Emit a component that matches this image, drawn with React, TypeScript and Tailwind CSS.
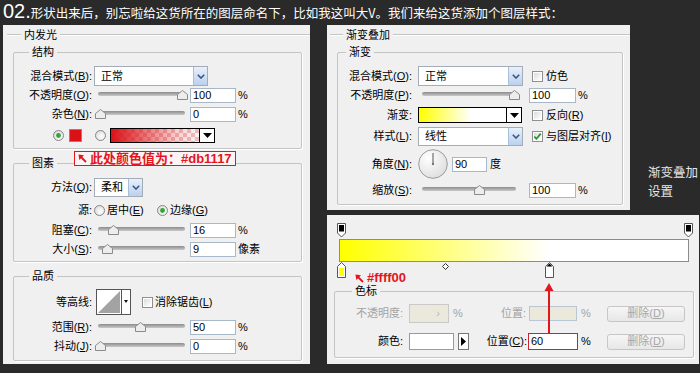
import React from "react";

const F = "font-['Liberation_Sans','Noto_Sans_CJK_SC',sans-serif]";
const LINE = "h-[2px] border-t border-t-[#c4c4c4] border-b border-b-white";
const GROUP = "border border-[#c4c4c4] rounded-[2px] shadow-[1px_1px_0_#ffffff]";
const LEGEND = "px-[3px] leading-[14px]";

function U({ c }: { c: string }) {
  return <span className="underline decoration-1 underline-offset-[1px]">{c}</span>;
}

function Lbl({ t, k, w, cls = "" }: { t: string; k?: string; w: string; cls?: string }) {
  return (
    <span className={`${w} text-right whitespace-nowrap shrink-0 ${cls}`}>
      {t}
      {k ? (
        <>
          (<U c={k} />)
        </>
      ) : null}
      :
    </span>
  );
}

function Slider({ cls, pos }: { cls: string; pos: number }) {
  return (
    <div className={`relative h-[15px] shrink-0 ${cls}`}>
      <div className="absolute left-0 right-0 top-[4px] h-[4px] rounded-full bg-gradient-to-b from-[#8c8c8c] to-[#c9c9c9]" />
      <svg className="absolute top-[2px]" style={{ left: pos - 5 }} width="11" height="10" viewBox="0 0 11 10">
        <path d="M0.5,4.5 L5.5,0.5 L10.5,4.5 L10.5,9.5 L0.5,9.5 Z" fill="#ededed" stroke="#8a8a8a" />
      </svg>
    </div>
  );
}

function Field({ v, cls = "", h = "h-[15px]", border = "border-[#a9b8c8]" }: { v: string; cls?: string; h?: string; border?: string }) {
  return (
    <div className={`${h} shrink-0 bg-white border ${border} pl-[2px] flex items-center text-[11px] leading-none ${cls}`}>
      {v}
    </div>
  );
}

function Chevron() {
  return (
    <svg width="8" height="5" viewBox="0 0 8 5">
      <path d="M0.8,0.8 L4,4 L7.2,0.8" fill="none" stroke="#3a5684" strokeWidth="1.6" />
    </svg>
  );
}

function Select({ v, cls }: { v: string; cls: string }) {
  return (
    <div className={`flex shrink-0 bg-white border border-[#a3acb7] ${cls}`}>
      <span className="flex-1 pl-[6px] flex items-center">{v}</span>
      <span className="w-[14px] flex items-center justify-center bg-gradient-to-b from-[#e8f0fb] to-[#bcd1ee] border-l border-[#a9bfd9]">
        <Chevron />
      </span>
    </div>
  );
}

function Check({ on = false, cls = "" }: { on?: boolean; cls?: string }) {
  return (
    <svg className={`shrink-0 ${cls}`} width="11" height="11" viewBox="0 0 11 11">
      <defs>
        <linearGradient id="cb" x1="0" y1="0" x2="1" y2="1">
          <stop offset="0" stopColor="#dcdcdc" />
          <stop offset="1" stopColor="#ffffff" />
        </linearGradient>
      </defs>
      <rect x="0.5" y="0.5" width="10" height="10" fill="#fff" stroke="#8e8f8f" />
      <rect x="2" y="2" width="7" height="7" fill="url(#cb)" />
      {on && <path d="M2.3,5.5 L4.4,7.8 L8.8,2.6" fill="none" stroke="#1f9a1f" strokeWidth="1.7" />}
    </svg>
  );
}

function Radio({ on = false, cls = "" }: { on?: boolean; cls?: string }) {
  return (
    <svg className={`shrink-0 ${cls}`} width="11" height="11" viewBox="0 0 11 11">
      <defs>
        <radialGradient id="rg" cx="0.6" cy="0.6" r="0.6">
          <stop offset="0" stopColor="#ffffff" />
          <stop offset="1" stopColor="#dedede" />
        </radialGradient>
      </defs>
      <circle cx="5.5" cy="5.5" r="5" fill="url(#rg)" stroke="#858687" />
      {on && <circle cx="5.5" cy="5.5" r="2.4" fill="#36a336" />}
    </svg>
  );
}

function Header({ t, left }: { t: string; left: string }) {
  return (
    <div className="mt-[3px] h-[14px] flex items-center">
      <div className={`${left} ${LINE}`} />
      <span className="px-[3px] leading-[14px] whitespace-nowrap">{t}</span>
      <div className={`flex-1 ${LINE}`} />
    </div>
  );
}

function Row({ cls, children }: { cls: string; children: React.ReactNode }) {
  return <div className={`flex items-center ${cls}`}>{children}</div>;
}

function Dial() {
  return (
    <svg className="shrink-0" width="30" height="30" viewBox="0 0 30 30">
      <defs>
        <radialGradient id="dg" cx="0.35" cy="0.3" r="0.8">
          <stop offset="0" stopColor="#ffffff" />
          <stop offset="1" stopColor="#dcdcdc" />
        </radialGradient>
      </defs>
      <circle cx="15" cy="15" r="14.3" fill="url(#dg)" stroke="#9b9b9b" />
      <line x1="15" y1="15" x2="15" y2="4" stroke="#555" strokeWidth="1" />
      <circle cx="15" cy="15" r="1.2" fill="#777" />
    </svg>
  );
}

function Contour() {
  return (
    <svg className="shrink-0 ml-[4px]" width="35" height="26" viewBox="0 0 35 26">
      <rect x="0.5" y="0.5" width="34" height="25" fill="#fff" stroke="#555" />
      <polygon points="2,24 24,2 24,24" fill="#a3a3a3" />
      <line x1="25.5" y1="0.5" x2="25.5" y2="25.5" stroke="#555" />
      <polygon points="28,11 32,11 30,14" fill="#111" />
    </svg>
  );
}

function TopStop({ cls }: { cls: string }) {
  return (
    <svg className={`absolute ${cls}`} width="9" height="15" viewBox="0 0 9 15">
      <path d="M0.5,0.5 H8.5 V10 L4.5,14 L0.5,10 Z" fill="#fff" stroke="#555" />
      <rect x="2" y="2" width="5" height="6.5" fill="#000" />
    </svg>
  );
}

function BottomStop({ cls, color, selected }: { cls: string; color: string; selected?: boolean }) {
  return (
    <svg className={`absolute ${cls}`} width="9" height="16" viewBox="0 0 9 16">
      <path d="M4.5,0.5 L8.5,4.5 V15.5 H0.5 V4.5 Z" fill="#fff" stroke="#555" />
      {selected && <path d="M4.5,1.5 L7.5,4.5 H1.5 Z" fill="#000" />}
      <rect x="2" y="6" width="5" height="8" fill={color} />
    </svg>
  );
}

function RedArrowSmall() {
  return (
    <svg width="9" height="9" viewBox="0 0 9 9" className="shrink-0">
      <path d="M8,8 L2,2" stroke="#e3161d" strokeWidth="1.8" />
      <path d="M0.5,0.5 L6,1.3 L1.3,6 Z" fill="#e3161d" />
    </svg>
  );
}

function Btn({ cls }: { cls: string }) {
  return (
    <div className={`w-[78px] shrink-0 flex items-center justify-center border border-[#c6c6c6] rounded-[3px] bg-gradient-to-b from-[#f6f6f6] to-[#e7e7e7] text-[#a6a6a6] ${cls}`}>
      删除(<U c="D" />)
    </div>
  );
}

function LeftPanel() {
  return (
    <div className="ml-[3px] w-[307px] h-[339px] bg-[#f0f0f0] flex flex-col shrink-0">
      <Header t="内发光" left="ml-[4px] w-[14px]" />

      <fieldset className={`mt-[3px] ml-[10px] mr-[8px] pb-[5px] ${GROUP}`}>
        <legend className={`ml-[15px] ${LEGEND}`}>结构</legend>
        <Row cls="mt-[7px] h-[20px]">
          <Lbl t="混合模式" k="B" w="w-[78px]" />
          <Select v="正常" cls="ml-[2px] w-[114px] h-[20px]" />
        </Row>
        <Row cls="mt-[2px] h-[15px]">
          <Lbl t="不透明度" k="O" w="w-[78px]" />
          <Slider cls="ml-[6px] w-[87px]" pos={84} />
          <Field v="100" cls="ml-[5px] w-[46px]" />
          <span className="ml-[2px]">%</span>
        </Row>
        <Row cls="mt-[4px] h-[15px]">
          <Lbl t="杂色" k="N" w="w-[78px]" />
          <Slider cls="ml-[6px] w-[87px]" pos={2} />
          <Field v="0" cls="ml-[5px] w-[46px]" />
          <span className="ml-[2px]">%</span>
        </Row>
        <Row cls="mt-[6px] h-[15px]">
          <Radio on cls="ml-[39px]" />
          <div className="ml-[5px] w-[13px] h-[13px] bg-[#db1117] border border-[#8a8a8a]" />
          <Radio cls="ml-[13px]" />
          <div className="ml-[4px] w-[105px] h-[15px] flex border border-black">
            <div className="flex-1 bg-[repeating-conic-gradient(#efc6c6_0%_25%,#ffffff_0%_50%)] bg-[length:8px_8px]">
              <div className="w-full h-full bg-[linear-gradient(to_right,#db1117,rgba(219,17,23,0.2)_75%,rgba(219,17,23,0.05))]" />
            </div>
            <div className="w-[15px] border-l border-black bg-white flex items-center justify-center">
              <svg width="9" height="5" viewBox="0 0 9 5">
                <polygon points="0,0 9,0 4.5,5" fill="#000" />
              </svg>
            </div>
          </div>
        </Row>
      </fieldset>

      <fieldset className={`mt-[7px] ml-[10px] mr-[8px] pb-[4px] ${GROUP}`}>
        <legend className={`ml-[15px] ${LEGEND}`}>图素</legend>
        <Row cls="mt-[8px] h-[19px]">
          <Lbl t="方法" k="Q" w="w-[78px]" />
          <Select v="柔和" cls="ml-[2px] w-[49px] h-[19px]" />
        </Row>
        <Row cls="mt-[6px] h-[14px]">
          <Lbl t="源" w="w-[78px]" />
          <div className="ml-[2px] w-[63px] flex items-center shrink-0">
            <Radio />
            <span className="ml-[2px] whitespace-nowrap">
              居中(<U c="E" />)
            </span>
          </div>
          <Radio on />
          <span className="ml-[2px] whitespace-nowrap">
            边缘(<U c="G" />)
          </span>
        </Row>
        <Row cls="mt-[6px] h-[15px]">
          <Lbl t="阻塞" k="C" w="w-[78px]" />
          <Slider cls="ml-[6px] w-[87px]" pos={15} />
          <Field v="16" cls="ml-[5px] w-[46px]" />
          <span className="ml-[2px]">%</span>
        </Row>
        <Row cls="mt-[4px] h-[15px]">
          <Lbl t="大小" k="S" w="w-[78px]" />
          <Slider cls="ml-[6px] w-[87px]" pos={9} />
          <Field v="9" cls="ml-[5px] w-[46px]" />
          <span className="ml-[2px]">像素</span>
        </Row>
      </fieldset>

      <fieldset className={`mt-[7px] ml-[10px] mr-[8px] pb-[6px] ${GROUP}`}>
        <legend className={`ml-[15px] ${LEGEND}`}>品质</legend>
        <Row cls="mt-[6px] h-[26px]">
          <Lbl t="等高线" w="w-[78px]" />
          <Contour />
          <Check cls="ml-[11px]" />
          <span className="ml-[2px] whitespace-nowrap">
            消除锯齿(<U c="L" />)
          </span>
        </Row>
        <Row cls="mt-[5px] h-[15px]">
          <Lbl t="范围" k="R" w="w-[78px]" />
          <Slider cls="ml-[6px] w-[87px]" pos={42} />
          <Field v="50" cls="ml-[5px] w-[46px]" />
          <span className="ml-[2px]">%</span>
        </Row>
        <Row cls="mt-[4px] h-[15px]">
          <Lbl t="抖动" k="J" w="w-[78px]" />
          <Slider cls="ml-[6px] w-[87px]" pos={2} />
          <Field v="0" cls="ml-[5px] w-[46px]" />
          <span className="ml-[2px]">%</span>
        </Row>
      </fieldset>
    </div>
  );
}

function TopRight() {
  return (
    <div className="w-[303px] h-[185px] bg-[#f0f0f0] flex flex-col shrink-0">
      <Header t="渐变叠加" left="ml-[3px] w-[13px]" />
      <fieldset className={`mt-[3px] ml-[10px] mr-[7px] pb-[6px] ${GROUP}`}>
        <legend className={`ml-[8px] ${LEGEND}`}>渐变</legend>
        <Row cls="mt-[7px] h-[20px]">
          <Lbl t="混合模式" k="O" w="w-[74px]" />
          <Select v="正常" cls="ml-[6px] w-[105px] h-[20px]" />
          <Check cls="ml-[9px]" />
          <span className="ml-[3px]">仿色</span>
        </Row>
        <Row cls="mt-[2px] h-[15px]">
          <Lbl t="不透明度" k="P" w="w-[74px]" />
          <Slider cls="ml-[10px] w-[94px]" pos={92} />
          <Field v="100" cls="ml-[13px] w-[47px]" />
          <span className="ml-[2px]">%</span>
        </Row>
        <Row cls="mt-[4px] h-[16px]">
          <Lbl t="渐变" w="w-[74px]" />
          <div className="ml-[6px] w-[104px] h-[16px] flex border border-black shrink-0">
            <div className="flex-1 bg-[linear-gradient(to_right,#ffff00,#ffffff_60%)]" />
            <div className="w-[15px] border-l border-black bg-white flex items-center justify-center">
              <svg width="9" height="5" viewBox="0 0 9 5">
                <polygon points="0,0 9,0 4.5,5" fill="#000" />
              </svg>
            </div>
          </div>
          <Check cls="ml-[10px]" />
          <span className="ml-[3px] whitespace-nowrap">
            反向(<U c="R" />)
          </span>
        </Row>
        <Row cls="mt-[4px] h-[19px]">
          <Lbl t="样式" k="L" w="w-[74px]" />
          <Select v="线性" cls="ml-[6px] w-[105px] h-[19px]" />
          <Check on cls="ml-[9px]" />
          <span className="ml-[3px] whitespace-nowrap">
            与图层对齐(<U c="I" />)
          </span>
        </Row>
        <Row cls="mt-[3px] h-[30px]">
          <Lbl t="角度" k="N" w="w-[74px]" />
          <div className="ml-[6px] flex">
            <Dial />
          </div>
          <Field v="90" cls="ml-[4px] w-[35px]" />
          <span className="ml-[3px]">度</span>
        </Row>
        <Row cls="mt-[4px] h-[15px]">
          <Lbl t="缩放" k="S" w="w-[74px]" />
          <Slider cls="ml-[10px] w-[94px]" pos={57} />
          <Field v="100" cls="ml-[13px] w-[47px]" />
          <span className="ml-[2px]">%</span>
        </Row>
      </fieldset>
    </div>
  );
}

function BottomRight() {
  return (
    <div className="mt-[5px] w-[372px] h-[149px] bg-[#f0f0f0] flex flex-col shrink-0">
      <div className="relative mt-[7px] ml-[10px] w-[358px] h-[56px]">
        <div className="ml-[2px] mt-[17px] w-[350px] h-[23px] border border-[#8c8c8c] bg-[linear-gradient(to_right,#ffff00,#ffffff_60%)]" />
        <TopStop cls="left-0 top-[1px]" />
        <TopStop cls="left-[347px] top-[1px]" />
        <BottomStop cls="left-0 top-[40px]" color="#ffff00" />
        <BottomStop cls="left-[208px] top-[40px]" color="#ffffff" selected />
        <svg className="absolute left-[105px] top-[41px]" width="7" height="7" viewBox="0 0 7 7">
          <path d="M3.5,0.5 L6.5,3.5 L3.5,6.5 L0.5,3.5 Z" fill="#fff" stroke="#333" />
        </svg>
      </div>
      <fieldset className={`mt-[6px] ml-[7px] mr-[5px] pb-[7px] ${GROUP}`}>
        <legend className={`ml-[17px] ${LEGEND}`}>色标</legend>
        <Row cls="mt-[6px] h-[19px] text-[#a3a3a3]">
          <Lbl t="不透明度" w="w-[68px]" />
          <div className="ml-[6px] w-[40px] h-[19px] shrink-0 border border-[#c9c9c9] bg-[#ebe9dc] flex items-center justify-end pr-[8px] text-[#b5b5b5]">
            ›
          </div>
          <span className="ml-[4px] w-[30px] shrink-0">%</span>
          <Lbl t="位置" w="w-[43px]" />
          <div className="ml-[3px] w-[48px] h-[15px] shrink-0 border border-[#b9c6d4] bg-[#ebe9dc]" />
          <span className="ml-[4px] w-[22px] shrink-0">%</span>
          <Btn cls="ml-[4px] h-[16px]" />
        </Row>
        <Row cls="mt-[10px] h-[17px]">
          <Lbl t="颜色" w="w-[68px]" />
          <div className="ml-[6px] w-[45px] h-[17px] shrink-0 bg-white border border-[#9a9a9a]" />
          <div className="ml-[4px] w-[11px] h-[17px] shrink-0 border border-[#777] bg-white flex items-center justify-center">
            <svg width="5" height="9" viewBox="0 0 5 9">
              <polygon points="0,0 5,4.5 0,9" fill="#000" />
            </svg>
          </div>
          <span className="w-[58px] text-right whitespace-nowrap shrink-0">
            位置(<U c="C" />):
          </span>
          <Field v="60" h="h-[17px]" border="border-[#d0202a]" cls="ml-[1px] w-[50px]" />
          <span className="ml-[3px] w-[22px] shrink-0">%</span>
          <Btn cls="ml-[4px] h-[16px]" />
        </Row>
      </fieldset>
    </div>
  );
}

export default function App() {
  return (
    <div className={`w-[700px] h-[373px] bg-[#2a2a2a] relative overflow-hidden ${F} text-[11px] text-black`}>
      <div className="h-[25px] flex items-baseline pl-[3px] text-white">
        <span className="text-[20px] leading-[22px] font-['Liberation_Sans',sans-serif]">02.</span>
        <span className="text-[12.5px] leading-[22px] font-['Noto_Sans_CJK_SC',sans-serif]">
          形状出来后，别忘啦给这货所在的图层命名下，比如我这叫大V。我们来给这货添加个图层样式：
        </span>
      </div>
      <div className="flex">
        <LeftPanel />
        <div className="ml-[17px] flex flex-col">
          <div className="flex">
            <TopRight />
            <div className="ml-[18px] pt-[137px] flex flex-col text-[12.5px] leading-[19px] text-[#e6e6e6] font-['Noto_Sans_CJK_SC',sans-serif]">
              <span>渐变叠加</span>
              <span>设置</span>
            </div>
          </div>
          <BottomRight />
        </div>
      </div>

      <div className="absolute left-[74px] top-[151px] h-[15px] flex items-center gap-[3px] px-[3px] border border-[#e3161d] bg-[#fbf4f4] text-[#e3161d] text-[13px] font-bold leading-none whitespace-nowrap">
        <RedArrowSmall />
        <span>此处颜色值为：#db1117</span>
      </div>

      <div className="absolute left-[355px] top-[271px] flex items-center gap-[3px] text-[#e3161d] text-[13px] font-bold leading-[14px]">
        <RedArrowSmall />
        <span>#ffff00</span>
      </div>

      <svg className="absolute left-[544px] top-[283px]" width="10" height="51" viewBox="0 0 10 51">
        <line x1="5" y1="6" x2="5" y2="51" stroke="#e3161d" strokeWidth="2" />
        <polygon points="5,0 9.5,8 0.5,8" fill="#e3161d" />
      </svg>
    </div>
  );
}
